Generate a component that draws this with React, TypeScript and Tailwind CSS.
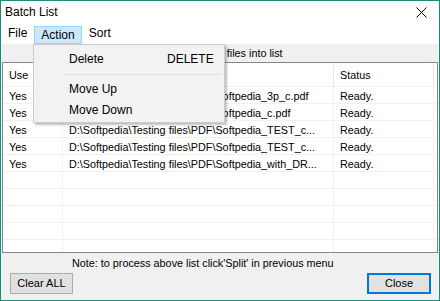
const rows = [
  'D:\\Softpedia\\Testing files\\PDF\\Softpedia_3p_c.pdf',
  'D:\\Softpedia\\Testing files\\PDF\\Softpedia_c.pdf',
  'D:\\Softpedia\\Testing files\\PDF\\Softpedia_TEST_c...',
  'D:\\Softpedia\\Testing files\\PDF\\Softpedia_TEST_c...',
  'D:\\Softpedia\\Testing files\\PDF\\Softpedia_with_DR...',
];

const font = { fontFamily: '"Liberation Sans", Arial, sans-serif' };

function Row({ use, path, status }: { use?: string; path?: string; status?: string }) {
  return (
    <div className="flex h-[17px] border-b border-[#f0f0f0] text-[10.8px] leading-[16px] pt-[1px] text-black">
      <div className="w-[60px] pl-[6px] border-r border-[#f0f0f0] shrink-0">{use}</div>
      <div className="w-[271px] pl-[6px] border-r border-[#f0f0f0] shrink-0 whitespace-nowrap overflow-hidden">{path}</div>
      <div className="w-[100px] pl-[6px] border-r border-[#f0f0f0] shrink-0">{status}</div>
    </div>
  );
}

export default function App() {
  return (
    <div className="relative w-[440px] h-[301px] border border-[#1c8c7a] bg-[#f0f0f0] flex flex-col overflow-hidden" style={font}>
      {/* title bar */}
      <div className="h-[21px] bg-white flex items-center justify-between pl-[4px] pr-[12px] text-[12px] text-black">
        <span>Batch List</span>
        <svg width="11" height="11" viewBox="0 0 11 11" className="mt-[1px]">
          <path d="M0.5 0.5 L10.5 10.5 M10.5 0.5 L0.5 10.5" stroke="#000" strokeWidth="1" />
        </svg>
      </div>
      {/* menu bar */}
      <div className="h-[22px] bg-white flex items-center text-[12px] text-black">
        <span className="ml-[7px]">File</span>
        <span className="ml-[7px] h-[18px] mt-[4px] px-[6px] flex items-center bg-[#cce8ff] border border-[#99d1ff]">Action</span>
        <span className="ml-[7px]">Sort</span>
      </div>
      {/* hint */}
      <div className="h-[18px] flex items-center pl-[140px] text-[10.8px] text-black">Drag &amp; drop PDF files into list</div>
      {/* list */}
      <div className="mx-[1px] h-[191px] border border-[#828790] bg-white overflow-hidden">
        <div className="flex h-[24px] items-center text-[10.8px] text-black border-b border-[#f0f0f0] pt-[2px]">
          <div className="w-[60px] pl-[6px] h-full flex items-center border-r border-[#e5e5e5] shrink-0">Use</div>
          <div className="w-[271px] h-full border-r border-[#e5e5e5] shrink-0" />
          <div className="w-[100px] pl-[6px] h-full flex items-center border-r border-[#e5e5e5] shrink-0">Status</div>
        </div>
        {rows.map((p, i) => (
          <Row key={i} use="Yes" path={p} status="Ready." />
        ))}
        {[0, 1, 2, 3, 4].map((i) => (
          <Row key={'e' + i} />
        ))}
      </div>
      {/* footer */}
      <div className="h-[18px] mt-[1px] flex items-center pl-[71px] text-[10.8px] text-black">
        Note: to process above list click'Split' in previous menu
      </div>
      <div className="flex justify-between px-[9px] mt-[1px]">
        <button className="w-[63px] h-[21px] bg-[#e1e1e1] border border-[#adadad] text-[11px] text-black">Clear ALL</button>
        <button className="w-[64px] h-[21px] bg-[#e1e1e1] border-2 border-[#0078d7] text-[11px] text-black mr-[-1px]">Close</button>
      </div>
      {/* dropdown menu */}
      <div className="absolute left-[32px] top-[43px] w-[192px] h-[79px] bg-[#f2f2f2] border border-[#cccccc] shadow-[2px_2px_2px_rgba(0,0,0,0.25)] text-[12px] text-black flex flex-col pt-[3px]">
        <div className="h-[22px] flex items-center pl-[35px]">
          <span className="w-[98px]">Delete</span>
          <span>DELETE</span>
        </div>
        <div className="h-[8px] flex items-center pl-[30px] pr-[2px]">
          <div className="h-px w-full bg-[#e0e0e0]" />
        </div>
        <div className="h-[21px] flex items-center pl-[35px]">Move Up</div>
        <div className="h-[21px] flex items-center pl-[35px]">Move Down</div>
      </div>
    </div>
  );
}
